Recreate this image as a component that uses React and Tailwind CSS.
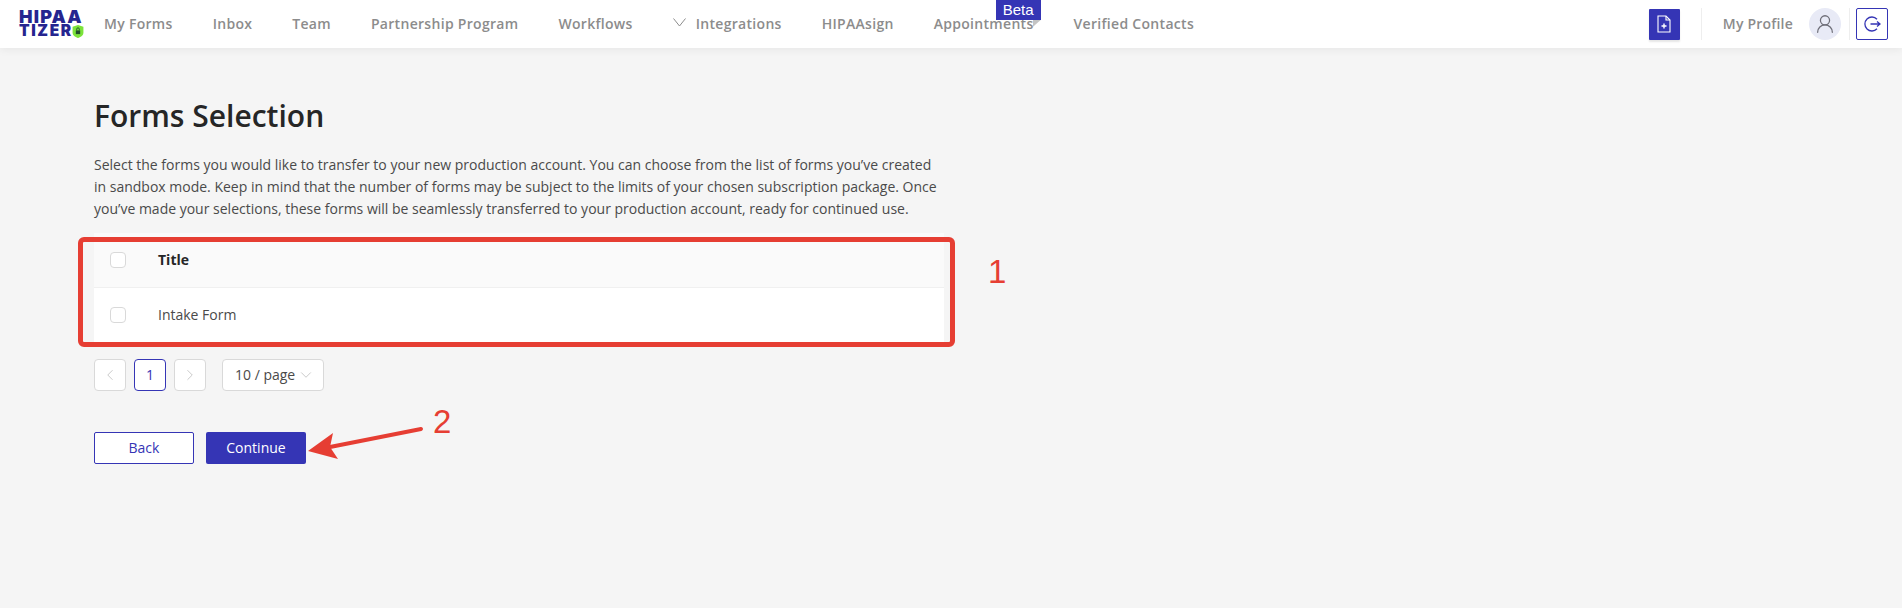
import { ChevronDown, ChevronLeft, ChevronRight, UserRound } from 'lucide-react';

const navItems = [
    { label: 'My Forms' },
    { label: 'Inbox' },
    { label: 'Team' },
    { label: 'Partnership Program' },
    { label: 'Workflows' },
    { label: 'Integrations', chevron: true },
    { label: 'HIPAAsign' },
    { label: 'Appointments', beta: true },
    { label: 'Verified Contacts' },
];

function Logo() {
    return (
        <div className="w-[66px] ml-[19px] mr-[19px] shrink-0 font-['Inter',sans-serif] font-black text-[#25258f] leading-[14px]">
            <div className="text-[18px] tracking-[1.2px]">HIPAA</div>
            <div className="flex items-center text-[15.5px] tracking-[1.6px]">
                TIZER
                <svg width="12" height="13" viewBox="0 0 11 12" className="-ml-px">
                    <path d="M0.5 1.5 L5.5 0 L10.5 1.5 V7 C10.5 10 7.5 11.5 5.5 12 C3.5 11.5 0.5 10 0.5 7 Z" fill="#7be33a" />
                    <rect x="3.5" y="5" width="4" height="3.4" fill="#1f4f2a" />
                    <path d="M4.3 5 V3.8 A1.2 1.2 0 0 1 6.7 3.8 V5" fill="none" stroke="#1f4f2a" strokeWidth="0.8" />
                </svg>
            </div>
        </div>
    );
}

function NavLink({ item }) {
    return (
        <div className="relative flex items-center">
            {item.chevron && (
                <svg width="13" height="9" viewBox="0 0 13 9" fill="none" stroke="#8c8c8c" strokeWidth="1" className="mr-[10px] -mt-1">
                    <path d="M0.5 0.5 L6.5 8 L12.5 0.5" />
                </svg>
            )}
            <a className="text-sm font-semibold tracking-[0.3px] text-[#8c8c8c] whitespace-nowrap">{item.label}</a>
            {item.beta && (
                <>
                    <span className="absolute -top-3.5 left-[62px] w-[45px] h-5 bg-[#3535b5] text-white text-[15px] leading-5 text-center font-['Liberation_Sans',sans-serif]">Beta</span>
                    <span className="absolute top-[6px] left-[99px] w-2 h-[7px] bg-[#c4c4c4] [clip-path:polygon(0_100%,100%_0,0_0)]" />
                </>
            )}
        </div>
    );
}

function Checkbox() {
    return <span className="block w-4 h-4 bg-white border border-[#d9d9d9] rounded-sm" />;
}

function PageButton({ children, active }) {
    return (
        <button className={`w-8 h-8 flex items-center justify-center bg-white rounded-sm border text-sm ${active ? 'border-[#3535b5] text-[#3535b5]' : 'border-[#d9d9d9] text-[#bfbfbf]'}`}>
            {children}
        </button>
    );
}

export default function App() {
    return (
        <div className="relative h-[608px] overflow-hidden bg-[#f5f5f5] font-['Open_Sans',sans-serif]">
            <header className="h-12 bg-white shadow-[0_2px_8px_rgba(0,0,0,0.06)] flex items-center">
                <Logo />
                <nav className="flex items-center gap-10">
                    {navItems.map((item) => <NavLink key={item.label} item={item} />)}
                </nav>
                <div className="ml-auto flex items-center pr-[14px]">
                    <button className="w-[31px] h-[31px] bg-[#3535b5] rounded-[1px] flex items-center justify-center shadow-[0_2px_2px_rgba(0,0,0,0.1)]">
                        <svg width="14" height="18" viewBox="0 0 14 18" fill="none" stroke="white" strokeWidth="1.1">
                            <path d="M1 1 H9 L13 5 V17 H1 Z" />
                            <path d="M9 1 V5 H13" />
                            <path d="M7 8.5 V13.5 M4.5 11 H9.5" strokeWidth="1.4" />
                        </svg>
                    </button>
                    <div className="w-px h-8 bg-[#eeeeee] ml-[21px] mr-[21px]" />
                    <span className="text-sm font-semibold tracking-[0.2px] text-[#8c8c8c] whitespace-nowrap">My Profile</span>
                    <div className="w-8 h-8 ml-4 rounded-full bg-[#e8eaf6] flex items-center justify-center">
                        <UserRound size={22} strokeWidth={1.4} className="text-[#6e6e78]" />
                    </div>
                    <div className="w-px h-8 bg-[#eeeeee] ml-2 mr-[6px]" />
                    <button className="w-8 h-8 border border-[#3535b5] rounded-[2px] flex items-center justify-center bg-white">
                        <svg width="18" height="18" viewBox="0 0 18 18" fill="none" stroke="#3535b5" strokeWidth="1.3">
                            <path d="M14 4.2 A7 7 0 1 0 14 13.8" />
                            <path d="M7.5 9 H17 M14 6.5 L17 9 L14 11.5" />
                        </svg>
                    </button>
                </div>
            </header>

            <main className="w-[850px] ml-[94px] pt-[50px]">
                <h1 className="text-[30px] leading-9 font-semibold text-[#262626]">Forms Selection</h1>
                <p className="mt-5 text-sm leading-[22px] text-[#4a4a4a]">
                    Select the forms you would like to transfer to your new production account. You can choose from the list of forms you’ve created in sandbox mode. Keep in mind that the number of forms may be subject to the limits of your chosen subscription package. Once you’ve made your selections, these forms will be seamlessly transferred to your production account, ready for continued use.
                </p>

                <div className="mt-[13px] text-sm">
                    <div className="h-[55px] bg-[#fafafa] border-b border-[#f0f0f0] flex items-center">
                        <div className="w-16 pl-4"><Checkbox /></div>
                        <span className="font-bold text-[#262626]">Title</span>
                    </div>
                    <div className="h-[54px] bg-white flex items-center">
                        <div className="w-16 pl-4"><Checkbox /></div>
                        <span className="text-[#4a4a4a]">Intake Form</span>
                    </div>
                </div>

                <div className="mt-[17px] flex items-center gap-2">
                    <PageButton><ChevronLeft size={18} strokeWidth={1.1} /></PageButton>
                    <PageButton active>1</PageButton>
                    <PageButton><ChevronRight size={18} strokeWidth={1.1} /></PageButton>
                    <div className="ml-2 w-[102px] h-8 bg-white border border-[#d9d9d9] rounded-sm flex items-center justify-between pl-3 pr-2 text-sm text-[#4a4a4a]">
                        10 / page
                        <ChevronDown size={18} strokeWidth={1.1} className="text-[#bfbfbf]" />
                    </div>
                </div>

                <div className="mt-[41px] flex gap-3">
                    <button className="w-[100px] h-8 bg-white border border-[#3535b5] rounded-[2px] text-sm text-[#3535b5]">Back</button>
                    <button className="w-[100px] h-8 bg-[#3535b5] rounded-[2px] text-sm font-medium text-white">Continue</button>
                </div>
            </main>

            {/* annotations drawn on top of the screenshot */}
            <div className="absolute left-[78px] top-[237px] w-[877px] h-[110px] border-[5px] border-[#e63e33] rounded-md" />
            <span className="absolute left-[988px] top-[254px] text-[33px] leading-9 text-[#e63e33] font-['Liberation_Sans',sans-serif]">1</span>
            <span className="absolute left-[433px] top-[404px] text-[33px] leading-9 text-[#e63e33] font-['Liberation_Sans',sans-serif]">2</span>
            <svg className="absolute left-[300px] top-[420px]" width="130" height="45" viewBox="300 420 130 45">
                <path d="M421 429 L330 447" stroke="#e63e33" strokeWidth="4" strokeLinecap="round" />
                <path d="M308 451 L333 433 L330 447 L338 459 Z" fill="#e63e33" />
            </svg>
        </div>
    );
}
